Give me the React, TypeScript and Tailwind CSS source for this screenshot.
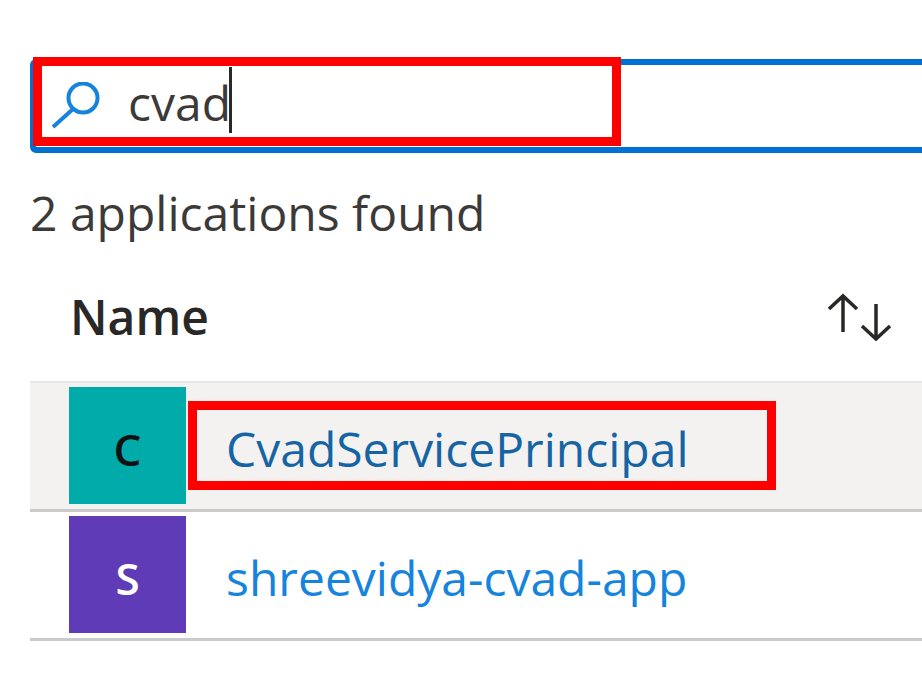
const applications = [
  {
    name: "CvadServicePrincipal",
    initial: "C",
    row: "bg-[#f3f2f1]",
    tile: "bg-[#00abaa] text-[#111111]",
    link: "text-[#1764a5]",
    highlighted: true,
  },
  {
    name: "shreevidya-cvad-app",
    initial: "S",
    row: "bg-white",
    tile: "bg-[#5f3bb7] text-white",
    link: "text-[#1683dc]",
    highlighted: false,
  },
];

function SearchIcon() {
  return (
    <svg className="h-12 w-12 shrink-0" viewBox="0 0 48 48" fill="none" stroke="#1683dc" strokeWidth="4" aria-hidden="true">
      <circle cx="31" cy="16" r="14.5" />
      <path d="M21 27 1 45" />
    </svg>
  );
}

function SortIcon() {
  return (
    <svg className="h-12 w-16" viewBox="0 0 64 48" fill="none" stroke="#292827" strokeWidth="3.5" aria-hidden="true">
      <path d="M15 39V3M1 16 15 3l14 13M48 11v35M34 33l14 13 14-13" />
    </svg>
  );
}

function Highlight({ className }: { className: string }) {
  return <span className={`pointer-events-none absolute h-[89px] w-[588px] border-[9px] border-[#ff0000] ${className}`} />;
}

export default function App() {
  return (
    <main className="min-h-screen overflow-hidden bg-white pt-[59px] pl-[30px] font-['Open_Sans','Noto_Sans',sans-serif] text-[48px] leading-[64px] text-[#3b3a39]">
      <div className="relative">
        <label className="-mr-2 flex h-[94px] items-center gap-7 rounded-md border-[6px] border-[#0070d2] pl-4">
          <SearchIcon />
          <input
            type="text"
            aria-label="Search applications"
            defaultValue="cvad"
            className="h-16 min-w-0 flex-1 bg-transparent pb-1.5 outline-none"
          />
        </label>
        <span className="absolute top-2 left-[199px] h-[66px] w-[3px] bg-[#292827]" />
        <Highlight className="-top-0.5 left-[3px]" />
      </div>

      <p className="mt-7 whitespace-nowrap">2 applications found</p>

      <table className="mt-6 w-full border-collapse">
        <thead>
          <tr>
            <th scope="col" className="p-0 text-left font-semibold text-[#292827]">
              <div className="flex h-[114px] items-center justify-between border-b-2 border-[#e9e8e7] pr-[30px] pb-4 pl-10">
                <span>Name</span>
                <button type="button" aria-label="Sort by name">
                  <SortIcon />
                </button>
              </div>
            </th>
          </tr>
        </thead>
        <tbody>
          {applications.map((app) => (
            <tr key={app.name} className={app.row}>
              <td className="p-0">
                <div className="flex items-center gap-10 border-b-[3px] border-[#cbcaca] pt-1 pb-[5px] pl-[39px]">
                  <span
                    className={`flex size-[117px] shrink-0 items-center justify-center pt-1.5 text-[44px] font-semibold ${app.tile}`}
                  >
                    {app.initial}
                  </span>
                  <span className="relative pt-1.5">
                    <a href="#" className={`whitespace-nowrap ${app.link}`}>
                      {app.name}
                    </a>
                    {app.highlighted && <Highlight className="-top-2.5 -left-[38px]" />}
                  </span>
                </div>
              </td>
            </tr>
          ))}
        </tbody>
      </table>
    </main>
  );
}
